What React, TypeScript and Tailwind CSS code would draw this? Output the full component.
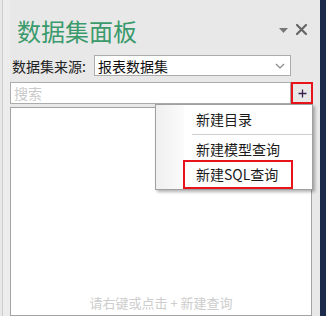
import React from "react";

const cjk = { fontFamily: '"Noto Sans CJK SC", "Noto Sans", sans-serif' };

function MenuItem({ label, boxed = false }: { label: string; boxed?: boolean }) {
  return (
    <div className="relative flex h-[25px] items-center pl-[40px] text-[14px] text-[#1a1a1a]">
      {boxed && (
        <div className="absolute left-[27px] top-[-2px] h-[29px] w-[110px] border-2 border-[#e8141b]" />
      )}
      <span className="relative">{label}</span>
    </div>
  );
}

export default function App() {
  return (
    <div
      className="relative flex h-[316px] w-[326px] overflow-hidden bg-[#e8e8e8]"
      style={cjk}
    >
      {/* left edge */}
      <div className="ml-[2px] h-full w-[8px] border-l border-[#cdcdcd] bg-[#ececec]" />

      {/* panel body */}
      <div className="flex h-full w-[310px] flex-col">
        {/* header */}
        <div className="flex h-[52px] items-start justify-between">
          <div className="pl-[7px] pt-[19px] text-[24px] leading-none text-[#3b9a6c]">
            数据集面板
          </div>
          <div className="flex items-center gap-[6px] pr-[12px] pt-[23px]">
            <svg width="11" height="8" viewBox="0 0 11 8">
              <path d="M1 2 L10 2 L5.5 7 Z" fill="#777" />
            </svg>
            <svg width="13" height="13" viewBox="0 0 13 13">
              <path
                d="M2 2 L11 11 M11 2 L2 11"
                stroke="#666"
                strokeWidth="2.2"
                strokeLinecap="round"
              />
            </svg>
          </div>
        </div>

        {/* data source row */}
        <div className="mt-[3px] flex h-[21px] items-center">
          <div className="w-[84px] pl-[2px] text-[14px] leading-none text-[#222]">
            数据集来源:
          </div>
          <div className="flex h-[21px] w-[197px] items-center justify-between border border-[#acacac] bg-white pl-[3px] pr-[5px]">
            <span className="text-[14px] leading-none text-[#111]">报表数据集</span>
            <svg width="10" height="6" viewBox="0 0 10 6">
              <path d="M1 1 L5 5 L9 1" fill="none" stroke="#888" strokeWidth="1.2" />
            </svg>
          </div>
        </div>

        {/* search row */}
        <div className="mt-[6px] flex h-[22px] items-stretch">
          <div className="flex w-[281px] items-center border border-[#ababab] bg-white pl-[3px] text-[14px] leading-none text-[#c9c9c9]">
            搜索
          </div>
          <div className="flex w-[22px] items-center justify-center border-2 border-[#e8141b]">
            <svg width="9" height="9" viewBox="0 0 9 9">
              <path d="M4.5 0.5 V8.5 M0.5 4.5 H8.5" stroke="#3a2050" strokeWidth="1.3" />
            </svg>
          </div>
        </div>

        {/* list box */}
        <div className="mt-[3px] flex w-[302px] flex-1 flex-col justify-end border border-[#a3a3a3] bg-white pb-[3px]">
          <div className="text-center text-[13px] text-[#cdcdcd]">
            请右键或点击 + 新建查询
          </div>
        </div>
      </div>

      {/* right dark edge */}
      <div className="h-full flex-1 bg-[#1c2a4b]" />

      {/* context menu */}
      <div className="absolute left-[155px] top-[104px] w-[158px] border border-[#a0a0a0] bg-white py-[2px] shadow-[2px_2px_3px_rgba(0,0,0,0.3)]">
        <div className="absolute bottom-0 left-0 top-0 w-[28px] bg-gradient-to-r from-[#efefef] to-[#fbfbfb]" />
        <MenuItem label="新建目录" />
        <div className="relative ml-[36px] my-[2px] h-px bg-[#cfcfcf]" />
        <MenuItem label="新建模型查询" />
        <MenuItem label="新建SQL查询" boxed />
      </div>
    </div>
  );
}
